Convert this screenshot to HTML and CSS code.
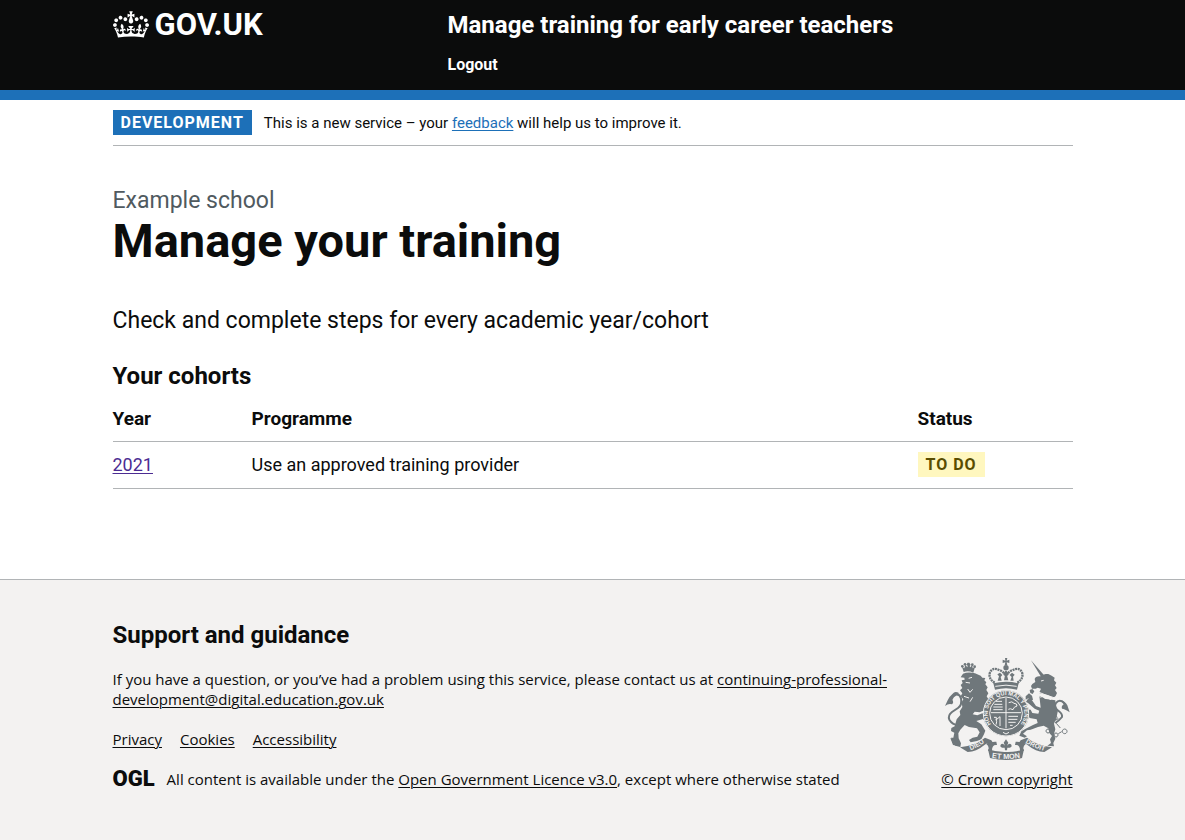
FILE: index.html
```html
<!DOCTYPE html>
<html lang="en">
<head>
<meta charset="utf-8">
<meta name="viewport" content="width=device-width, initial-scale=1">
<title>Manage your training</title>
<link rel="stylesheet" href="styles.css">
</head>
<body>
<header class="header">
  <div class="container header-grid">
    <a class="logo" href="#">
      <svg class="crown" viewBox="0 0 132 97" width="36" height="27" aria-hidden="true"><path fill="currentColor" fill-rule="evenodd" d="M25 30.2c3.5 1.5 7.7-.2 9.1-3.7 1.5-3.6-.2-7.8-3.9-9.2-3.6-1.4-7.6.3-9.1 3.9-1.4 3.5.3 7.5 3.9 9zM9 39.5c3.6 1.5 7.8-.2 9.2-3.7 1.5-3.6-.2-7.8-3.9-9.1-3.6-1.5-7.6.2-9.1 3.8-1.4 3.5.3 7.5 3.8 9zM4.4 57.2c3.5 1.5 7.7-.2 9.1-3.8 1.5-3.6-.2-7.7-3.9-9.1-3.5-1.5-7.6.3-9.1 3.8-1.4 3.5.3 7.6 3.9 9.1zm38.3-21.4c3.5 1.5 7.7-.2 9.1-3.8 1.5-3.6-.2-7.7-3.9-9.1-3.6-1.5-7.6.3-9.1 3.8-1.3 3.6.4 7.7 3.9 9.1zm64.4-5.6c-3.6 1.5-7.8-.2-9.1-3.7-1.5-3.6.2-7.8 3.8-9.2 3.6-1.4 7.7.3 9.2 3.9 1.3 3.5-.4 7.5-3.9 9zm15.9 9.3c-3.6 1.5-7.7-.2-9.1-3.7-1.5-3.6.2-7.8 3.7-9.1 3.6-1.5 7.7.2 9.2 3.8 1.5 3.5-.3 7.5-3.8 9zm4.7 17.7c-3.6 1.5-7.8-.2-9.2-3.8-1.5-3.6.2-7.7 3.9-9.1 3.6-1.5 7.7.3 9.2 3.8 1.3 3.5-.4 7.6-3.9 9.1zM89.3 35.8c-3.6 1.5-7.8-.2-9.2-3.8-1.4-3.6.2-7.7 3.9-9.1 3.6-1.5 7.7.3 9.2 3.8 1.4 3.6-.3 7.7-3.9 9.1zM69.7 17.7l8.9 4.7V9.3l-8.9 2.8c-.2-.3-.5-.6-.9-.9L72.4 0H59.6l3.5 11.2c-.3.3-.6.5-.9.9l-8.8-2.8v13.1l8.8-4.7c.3.3.6.7.9.9l-5 15.4v.1c-.2.8-.4 1.6-.4 2.4 0 4.1 3.1 7.5 7 8.1h.2c.3 0 .7.1 1 .1.4 0 .7 0 1-.1h.2c4-.6 7.1-4.1 7.1-8.1 0-.8-.1-1.7-.4-2.4V34l-5.1-15.4c.4-.2.7-.6 1-.9zM66 92.8c16.9 0 32.8 1.1 47.1 3.2 4-16.9 8.9-26.7 14-33.5l-9.6-3.4c1 4.9 1.1 7.2 0 10.2-1.5-1.4-3-4.3-4.2-8.7L108.6 76c2.8-2 5-3.2 7.5-3.3-4.4 9.4-10 11.9-13.6 11.2-4.3-.8-6.3-4.6-5.6-7.9 1-4.7 5.7-5.9 8-.5 4.3-8.7-3-11.4-7.6-8.8 7.1-7.2 7.9-13.5 2.1-21.1-8 6.1-8.1 12.3-4.5 20.8-4.7-5.4-12.1-2.5-9.5 6.2 3.4-5.2 7.9-2 7.2 3.1-.6 4.3-6.4 7.8-13.5 7.2-10.3-.9-10.9-8-11.2-13.8 2.5-.5 7.1 1.8 11 7.3L80.2 60c-4.1 4.4-8 5.3-12.3 5.4 1.4-4.4 8-11.6 8-11.6H55.5s6.4 7.2 7.9 11.6c-4.2-.1-8-1-12.3-5.4l1.4 16.4c3.9-5.5 8.5-7.7 10.9-7.3-.3 5.8-.9 12.8-11.1 13.8-7.2.6-12.9-2.9-13.5-7.2-.7-5 3.8-8.3 7.1-3.1 2.7-8.7-4.6-11.6-9.4-6.2 3.7-8.5 3.6-14.7-4.6-20.8-5.8 7.6-5 13.9 2.2 21.1-4.7-2.6-11.9.1-7.7 8.8 2.3-5.5 7.1-4.2 8.1.5.7 3.3-1.3 7.1-5.7 7.9-3.5.7-9-1.8-13.5-11.2 2.5.1 4.7 1.3 7.5 3.3l-4.7-15.4c-1.2 4.4-2.7 7.2-4.3 8.7-1.1-3-.9-5.3 0-10.2l-9.5 3.4c5 6.9 9.9 16.7 14 33.5 14.8-2.1 30.8-3.2 47.7-3.2z"/></svg>
      <span>GOV.UK</span>
    </a>
    <div class="header-content">
      <a class="service-name" href="#">Manage training for early career teachers</a>
      <nav class="nav"><a class="nav-link" href="#">Logout</a></nav>
    </div>
  </div>
</header>

<div class="container">
  <div class="phase-banner">
    <strong class="tag tag-phase">Development</strong>
    <span class="phase-text">This is a new service – your <a href="#">feedback</a> will help us to improve it.</span>
  </div>
  <main class="main">
    <span class="caption">Example school</span>
    <h1 class="title">Manage your training</h1>
    <p class="lead">Check and complete steps for every academic year/cohort</p>
    <h2 class="heading">Your cohorts</h2>
    <table class="table">
      <thead>
        <tr><th scope="col" class="col-year">Year</th><th scope="col">Programme</th><th scope="col" class="col-status">Status</th></tr>
      </thead>
      <tbody>
        <tr><td><a class="visited" href="#">2021</a></td><td>Use an approved training provider</td><td><strong class="tag tag-todo">To do</strong></td></tr>
      </tbody>
    </table>
  </main>
</div>

<footer class="footer">
  <div class="container footer-grid">
    <div class="footer-main">
      <h2 class="heading">Support and guidance</h2>
      <p class="footer-text">If you have a question, or you’ve had a problem using this service, please contact us at <a href="#">continuing-professional-development@digital.education.gov.uk</a></p>
      <ul class="footer-links">
        <li><a href="#">Privacy</a></li>
        <li><a href="#">Cookies</a></li>
        <li><a href="#">Accessibility</a></li>
      </ul>
      <div class="licence">
        <span class="ogl">OGL</span>
        <span>All content is available under the <a href="#">Open Government Licence v3.0</a>, except where otherwise stated</span>
      </div>
    </div>
    <a class="copyright" href="#">
      <svg class="arms" viewBox="27 21 378 309" width="126" height="103" aria-hidden="true">
        <defs>
          <path id="garter-path" d="M176 231A55 55 0 1 1 250 231"/>
          <path id="left-path" d="M98 303Q128 295 156 272"/>
          <path id="mid-path" d="M160 321Q213 333 266 321"/>
          <path id="right-path" d="M266 275Q295 294 334 305"/>
        </defs>
        <g class="ink">
          <!-- lion crown -->
          <path d="M86 66L81 50L88 55L91 44L97 52L98 47L94 44L98 38h5l4 6-3 4 2 4 6-8 1 11 7-5-5 18Q100 61 86 66Z"/>
          <circle cx="82" cy="49" r="4"/><circle cx="90" cy="43" r="4"/><circle cx="112" cy="44" r="4"/><circle cx="119" cy="50" r="4"/>
          <!-- lion -->
          <path d="M84 71Q100 64 120 70L137 77L142 83L151 84L148 91L154 97L151 103L158 112L154 120L160 130L155 139L160 148Q149 160 148 181L134 187L119 185L113 193L127 196L142 190L153 196L161 209L154 218L144 207L124 213L139 223L151 242L147 253L139 268L126 273L107 277L102 270L113 263L127 260L134 247L126 235L102 231L89 225L76 239L70 250L71 265L78 280L76 291L61 287L52 278L48 263L55 263L58 248L48 243L49 234L59 229L65 208L76 195L74 184L82 171L80 157L85 148L77 139L82 130L75 121L82 114L77 105L83 99L80 91L89 89L88 83L77 82Z"/>
          <path class="line-tail" d="M69 225Q52 224 43 209Q38 196 51 186L69 174Q82 165 78 145Q74 132 63 134Q53 138 49 149"/>
          <path d="M73 130Q60 121 53 131Q43 139 38 151L30 168Q41 159 51 163Q58 158 51 148Q57 135 73 130Z"/>
          <!-- royal crown -->
          <path d="M175 100Q213 91 251 100L246 119Q213 110 180 119Z"/>
          <circle cx="213" cy="53" r="8"/>
          <path d="M210 24h7l-2 8 8-3v10l-8-2 2 9h-8l2-9-8 2V29l8 3Z"/>
          <path d="M188 92l4-13-5-6 8-5 7 7-5 6 3 11ZM207 91l3-15-6-5 9-10 9 10-6 5 4 15ZM226 92l4-11-6-6 7-7 8 6-5 6 2 12Z"/>
          <!-- unicorn -->
          <path d="M288 31L326 74L318 80Z"/>
          <path d="M322 75L332 72L340 72L350 77L359 83L357 91L364 98L360 106L365 114L360 120L366 129L362 138L355 143L338 135L312 129L318 116L308 113L302 116L291 116L288 108L292 102L301 96L299 87Q302 77 317 79Z"/>
          <path d="M313 137L333 147L361 151Q361 170 369 181L365 200L357 221L361 238L357 252L361 266L355 279L357 289L337 287L348 279L345 268L351 258L343 249L340 235L326 227L309 231L287 239L276 241L264 251L276 259L269 263L253 257L259 244L272 236L294 225L308 219L305 208L284 204L276 191L269 187L271 178L287 179L292 189L310 191L313 182L299 176L280 160L273 155L279 146L291 151L303 168L317 173Z"/>
          <path d="M272 139l10-9 9 7 3 12-10 5-4-9-8 4ZM284 120l8-3 6 7-5 8-7-3Z"/>
          <path class="line-tail" d="M361 219Q373 211 381 201Q383 192 371 183Q356 173 362 160Q374 145 388 160"/>
          <path d="M377 150Q391 154 397 166L404 187Q389 176 381 176Q378 168 386 163Q384 157 377 150Z"/>
          <path d="M46 264l21 12 8 13-21-4Z"/>
          <!-- ribbons -->
          <path d="M75 292Q124 285 150 263L169 271L176 281L162 285L156 280L144 288Q125 305 98 306Z"/>
          <path d="M351 292Q302 285 276 263L257 271L250 281L264 285L270 280L282 288Q301 305 328 306Z"/>
          <path d="M159 298Q186 307 213 306Q240 307 267 298L261 324Q213 336 165 324Z"/>
          <path d="M153 281Q165 289 159 302L171 305Q170 282 186 285L184 275Q168 274 153 281ZM273 281Q261 289 267 302L255 305Q256 282 240 285L242 275Q258 274 273 281Z"/>
          <!-- lily -->
          <path d="M213 268l7 10-4 9q7-9 13-3 3 7-5 9h-7l-1 8h-6l-1-8h-7q-8-2-5-9 6-6 13 3l-4-9Z"/>
          <!-- garter -->
          <circle cx="213" cy="190" r="69"/>
        </g>
        <g class="paper-line">
          <circle cx="213" cy="190" r="68"/><circle cx="213" cy="190" r="49"/>
          <path d="M213 144v91M168 188h90M181 109q32-7 64 0M310 126q22 10 50 18M101 85l10-3M92 97l13 2M98 117l7 10 8-9M87 139l15 5M113 142l-8 13M318 93l8-2M311 135l6 7 7-5 6 9 8-5 7 8 8-5"/>
          <path d="M175 171h28M178 163h24M182 154h19M175 179h28M221 158q11-6 16 2 10 0 9 8-10 2-12 11-9-5-14-1M177 202h7v7l11-9v28M183 224q4-9 0-17M220 199h29M220 208h27M220 217h22M225 226h8"/>
          <path d="M204 247l9 5 9-5"/>
        </g>
        <path class="fine" d="M179 98Q159 86 165 67Q174 50 194 61Q207 65 211 77M247 98Q267 86 261 67Q252 50 232 61Q219 65 215 77"/>
        <path class="chain" d="M360 197a6 6 0 1 0 .1 0M370 206q-7 7-19 5M350 214l-11 17M339 237a6 6 0 1 0 .1 0M345 246l10 5M363 249a6 6 0 1 0 .1 0M370 251l10-6M389 237a7 7 0 1 0 .1 0M376 234l-12-14"/>
        <g class="arms-text">
          <text class="arms-garter"><textPath href="#garter-path" startOffset="50%" text-anchor="middle">HONI SOIT QUI MAL Y PENSE</textPath></text>
          <text><textPath href="#left-path" startOffset="50%" text-anchor="middle">DIEU</textPath></text>
          <text class="arms-motto"><textPath href="#mid-path" startOffset="50%" text-anchor="middle">ET MON</textPath></text>
          <text><textPath href="#right-path" startOffset="50%" text-anchor="middle">DROIT</textPath></text>
        </g>
      </svg>
      <span>© Crown copyright</span>
    </a>
  </div>
</footer>
</body>
</html>
```
FILE: styles.css
```css
* { box-sizing: border-box; }
html { background: #f3f2f1; }
body { margin: 0; background: #fff; color: #0b0c0c; font: 15px/20px Roboto, "Liberation Sans", sans-serif; }
a { color: inherit; text-underline-offset: 2px; text-decoration-thickness: 1px; }
h1, h2, p, ul { margin: 0; }
.container { max-width: 960px; margin: 0 auto; }
.header { background: #0b0c0c; color: #fff; border-bottom: 10px solid #1d70b8; }
.header-grid { display: grid; grid-template-columns: 335px 1fr; padding: 10px 0 15px; }
.header a { text-decoration: none; }
.logo, .service-name, .nav-link, .tag, .title, .heading, .table th, .ogl { font-family: Roboto, "Liberation Sans", sans-serif; font-weight: 700; }
.logo { display: flex; align-items: flex-start; gap: 6px; font-size: 31px; line-height: 30px; }
.crown { margin-top: 1px; }
.header-content { display: flex; flex-direction: column; gap: 15px; }
.service-name { font-size: 24px; line-height: 30px; }
.nav { display: flex; }
.nav-link { font-size: 16px; line-height: 20px; }
.phase-banner { display: flex; align-items: center; gap: 12px; padding: 10px 0; border-bottom: 1px solid #b1b4b6; }
.phase-banner a { color: #1d70b8; }
.tag { display: inline-block; padding: 5px 8px 4px; line-height: 16px; font-size: 16px; letter-spacing: 1px; text-transform: uppercase; vertical-align: top; }
.tag-phase { background: #1d70b8; color: #fff; }
.tag-todo { background: #fff7bf; color: #594d00; }
.main { padding: 40px 0 90px; }
.caption { display: block; color: #505a5f; font-size: 23px; line-height: 30px; }
.title { font-size: 47px; line-height: 50px; margin-bottom: 40px; }
.lead { font-size: 23px; line-height: 30px; margin-bottom: 25px; }
.heading { font-size: 24px; line-height: 30px; }
.table { width: 100%; border-collapse: collapse; font-size: 18px; line-height: 25px; margin-top: 5px; }
.table th, .table td { padding: 10px 20px 11px 0; text-align: left; vertical-align: top; border-bottom: 1px solid #b1b4b6; }
.table th { font-size: 19px; padding-bottom: 10px; }
.table .col-year { width: 139px; }
.table .col-status { width: 155px; }
.visited { color: #4c2c92; }
.footer { background: #f3f2f1; border-top: 1px solid #b1b4b6; padding: 40px 0; font-family: "Open Sans", "Liberation Sans", sans-serif; }
.footer-grid { display: flex; align-items: flex-end; justify-content: space-between; gap: 30px; }
.footer-main { flex: 1; max-width: 776px; }
.footer-text { margin: 19px 0 20px; }
.footer-links { display: flex; gap: 18px; padding: 0; list-style: none; margin-bottom: 20px; }
.licence { display: flex; gap: 12px; }
.ogl { font-size: 22px; line-height: 20px; font-weight: 900; }
.copyright { display: flex; flex-direction: column; align-items: center; gap: 9px; }
.ink { fill: #6f777b; }
.line-tail { fill: none; stroke: #6f777b; stroke-width: 6; }
.paper-line { fill: none; stroke: #f3f2f1; stroke-width: 3; }
.fine { fill: none; stroke: #6f777b; stroke-width: 7; stroke-dasharray: 6 2; }
.chain { fill: none; stroke: #6f777b; stroke-width: 3; }
.arms-text { fill: #f3f2f1; font: 700 20px "Liberation Sans", sans-serif; }
.arms-garter { font-size: 17px; }
.arms-motto { font-size: 22px; }
```
